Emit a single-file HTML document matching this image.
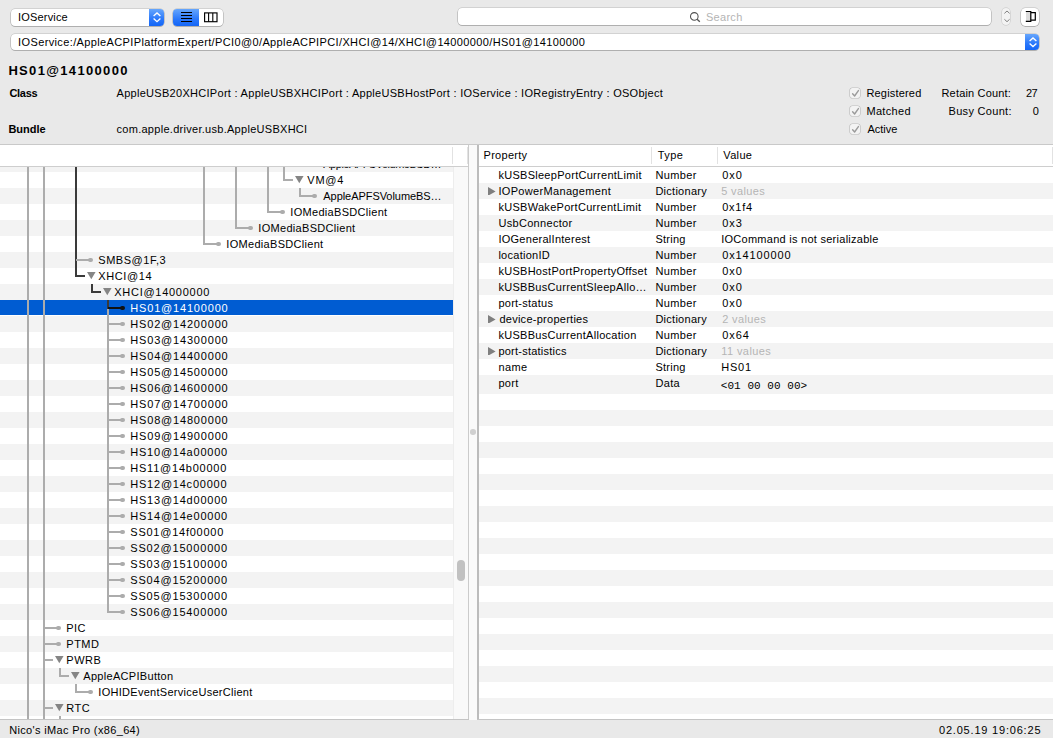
<!DOCTYPE html>
<html><head><meta charset="utf-8"><style>
html,body{margin:0;padding:0;}
body{width:1053px;height:738px;position:relative;overflow:hidden;background:#e9e9e9;font-family:"Liberation Sans",sans-serif;font-size:11px;color:#000;}
.t{position:absolute;white-space:nowrap;line-height:1;}
</style></head><body>
<div style="position:absolute;left:10.8px;top:8.5px;width:153.70px;height:17.00px;background:#fff;border-radius:4px;box-shadow:0 0 0 0.5px rgba(0,0,0,0.2),0 0.6px 0 0.4px rgba(0,0,0,0.16);overflow:hidden;"><div style="position:absolute;right:0;top:0;width:15.2px;height:100%;background:linear-gradient(#66a6fc,#2a78fb 60%,#1466f6)"></div></div>
<svg style="position:absolute;left:152.4px;top:10.5px;overflow:visible" width="10" height="12.7" viewBox="0 0 10 12.7"><path d="M1.6 5.1 L5 2 L8.4 5.1 M1.6 7.6 L5 10.7 L8.4 7.6" fill="none" stroke="#fff" stroke-width="1.35"/></svg>
<div style="position:absolute;left:173.4px;top:8.5px;width:49.40px;height:17.00px;background:#fff;border-radius:4px;box-shadow:0 0 0 0.5px rgba(0,0,0,0.2),0 0.6px 0 0.4px rgba(0,0,0,0.16);overflow:hidden;"><div style="position:absolute;left:0;top:0;width:25.6px;height:100%;background:linear-gradient(#66a6fc,#2a78fb 60%,#1466f6)"></div></div>
<div style="position:absolute;left:181px;top:12.200000000000001px;width:11px;height:1.2px;background:#000;"></div>
<div style="position:absolute;left:181px;top:15.0px;width:11px;height:1.2px;background:#000;"></div>
<div style="position:absolute;left:181px;top:17.799999999999997px;width:11px;height:1.2px;background:#000;"></div>
<div style="position:absolute;left:181px;top:20.7px;width:11px;height:1.2px;background:#000;"></div>
<svg style="position:absolute;left:203px;top:11px" width="16" height="12" viewBox="0 0 16 12"><rect x="1.6" y="1.9" width="12.4" height="8.8" fill="none" stroke="#000" stroke-width="1.15"/><line x1="5.6" y1="1.9" x2="5.6" y2="10.7" stroke="#000" stroke-width="1.1"/><line x1="9.8" y1="1.9" x2="9.8" y2="10.7" stroke="#000" stroke-width="1.1"/></svg>
<div style="position:absolute;left:457.7px;top:7.7px;width:533.80px;height:17.30px;background:#fff;border-radius:4px;box-shadow:0 0 0 0.5px rgba(0,0,0,0.2),0 0.6px 0 0.4px rgba(0,0,0,0.16);overflow:hidden;"></div>
<svg style="position:absolute;left:689px;top:11px" width="13" height="12" viewBox="0 0 13 12"><circle cx="5.3" cy="5.4" r="3.8" fill="none" stroke="#505050" stroke-width="1.05"/><line x1="8.1" y1="8.2" x2="10.8" y2="10.8" stroke="#505050" stroke-width="1.3"/></svg>
<div style="position:absolute;left:1002.1px;top:8.1px;width:8.4px;height:16.8px;background:#f3f3f3;border-radius:4.2px;box-shadow:0 0 0 0.5px rgba(0,0,0,0.16)"></div>
<svg style="position:absolute;left:1001.5px;top:9.2px;overflow:visible" width="10" height="14.7" viewBox="0 0 10 14.7"><path d="M2.4 4.4 L5 2 L7.6 4.4 M2.4 10.299999999999999 L5 12.7 L7.6 10.299999999999999" fill="none" stroke="#7a7a7a" stroke-width="0.95"/></svg>
<div style="position:absolute;left:1021.1px;top:7.7px;width:17.60px;height:18.30px;background:#fff;border-radius:4.5px;box-shadow:0 0 0 0.5px rgba(0,0,0,0.2),0 0.6px 0 0.4px rgba(0,0,0,0.16);overflow:hidden;"></div>
<svg style="position:absolute;left:1024px;top:10px" width="14" height="13" viewBox="0 0 14 13"><rect x="2" y="2" width="4.8" height="9" fill="#dcdcdc"/><path d="M1.8 1.5 H6.8 V11.4 H1.8" fill="none" stroke="#000" stroke-width="1.2"/><path d="M6.8 2.7 H11.3 V10.2 H6.8" fill="none" stroke="#000" stroke-width="1.2"/></svg>
<div style="position:absolute;left:10.8px;top:33.6px;width:1028.70px;height:16.50px;background:#fff;border-radius:4px;box-shadow:0 0 0 0.5px rgba(0,0,0,0.2),0 0.6px 0 0.4px rgba(0,0,0,0.16);overflow:hidden;"><div style="position:absolute;right:0;top:0;width:14.8px;height:100%;background:linear-gradient(#66a6fc,#2a78fb 60%,#1466f6)"></div></div>
<svg style="position:absolute;left:1027.6px;top:35.7px;overflow:visible" width="10" height="12.5" viewBox="0 0 10 12.5"><path d="M1.6 5.1 L5 2 L8.4 5.1 M1.6 7.4 L5 10.5 L8.4 7.4" fill="none" stroke="#fff" stroke-width="1.35"/></svg>
<div style="position:absolute;left:849.5px;top:87.5px;width:10.5px;height:10.5px;background:#f3f3f3;border-radius:2.5px;box-shadow:0 0 0 0.6px rgba(0,0,0,0.2)"></div>
<svg style="position:absolute;left:849.5px;top:87.5px" width="11" height="11" viewBox="0 0 11 11"><path d="M2.6 5.8 L4.6 8 L8.4 2.6" fill="none" stroke="#9b9b9b" stroke-width="1.4" stroke-linecap="round" stroke-linejoin="round"/></svg>
<div style="position:absolute;left:849.5px;top:105.5px;width:10.5px;height:10.5px;background:#f3f3f3;border-radius:2.5px;box-shadow:0 0 0 0.6px rgba(0,0,0,0.2)"></div>
<svg style="position:absolute;left:849.5px;top:105.5px" width="11" height="11" viewBox="0 0 11 11"><path d="M2.6 5.8 L4.6 8 L8.4 2.6" fill="none" stroke="#9b9b9b" stroke-width="1.4" stroke-linecap="round" stroke-linejoin="round"/></svg>
<div style="position:absolute;left:849.5px;top:123.5px;width:10.5px;height:10.5px;background:#f3f3f3;border-radius:2.5px;box-shadow:0 0 0 0.6px rgba(0,0,0,0.2)"></div>
<svg style="position:absolute;left:849.5px;top:123.5px" width="11" height="11" viewBox="0 0 11 11"><path d="M2.6 5.8 L4.6 8 L8.4 2.6" fill="none" stroke="#9b9b9b" stroke-width="1.4" stroke-linecap="round" stroke-linejoin="round"/></svg>
<div style="position:absolute;left:0px;top:144px;width:1053px;height:1px;background:#c9c9c9;"></div>
<div style="position:absolute;left:0px;top:145px;width:468px;height:574px;background:#fff;"></div>
<div style="position:absolute;left:0px;top:167px;width:453px;height:5px;background:#f3f3f3;"></div>
<div style="position:absolute;left:0px;top:188px;width:453px;height:16px;background:#f3f3f3;"></div>
<div style="position:absolute;left:0px;top:220px;width:453px;height:16px;background:#f3f3f3;"></div>
<div style="position:absolute;left:0px;top:252px;width:453px;height:16px;background:#f3f3f3;"></div>
<div style="position:absolute;left:0px;top:284px;width:453px;height:16px;background:#f3f3f3;"></div>
<div style="position:absolute;left:0px;top:316px;width:453px;height:16px;background:#f3f3f3;"></div>
<div style="position:absolute;left:0px;top:348px;width:453px;height:16px;background:#f3f3f3;"></div>
<div style="position:absolute;left:0px;top:380px;width:453px;height:16px;background:#f3f3f3;"></div>
<div style="position:absolute;left:0px;top:412px;width:453px;height:16px;background:#f3f3f3;"></div>
<div style="position:absolute;left:0px;top:444px;width:453px;height:16px;background:#f3f3f3;"></div>
<div style="position:absolute;left:0px;top:476px;width:453px;height:16px;background:#f3f3f3;"></div>
<div style="position:absolute;left:0px;top:508px;width:453px;height:16px;background:#f3f3f3;"></div>
<div style="position:absolute;left:0px;top:540px;width:453px;height:16px;background:#f3f3f3;"></div>
<div style="position:absolute;left:0px;top:572px;width:453px;height:16px;background:#f3f3f3;"></div>
<div style="position:absolute;left:0px;top:604px;width:453px;height:16px;background:#f3f3f3;"></div>
<div style="position:absolute;left:0px;top:636px;width:453px;height:16px;background:#f3f3f3;"></div>
<div style="position:absolute;left:0px;top:668px;width:453px;height:16px;background:#f3f3f3;"></div>
<div style="position:absolute;left:0px;top:700px;width:453px;height:16px;background:#f3f3f3;"></div>
<div style="position:absolute;left:0px;top:716px;width:453px;height:3px;background:#fff;"></div>
<div style="position:absolute;left:453px;top:167px;width:15px;height:552px;background:#f9f9f9;"></div>
<div style="position:absolute;left:453px;top:167px;width:1px;height:552px;background:#ededed;"></div>
<div style="position:absolute;left:457px;top:560px;width:8px;height:21px;background:#c1c1c1;border-radius:4px;"></div>
<div style="position:absolute;left:468px;top:145px;width:1px;height:574px;background:#cbcbcb;"></div>
<div style="position:absolute;left:469px;top:145px;width:8.2px;height:574px;background:#fafafa;"></div>
<div style="position:absolute;left:470.2px;top:429.2px;width:5.6px;height:5.6px;border-radius:50%;background:#d0d0d0"></div>
<div style="position:absolute;left:0px;top:300px;width:453px;height:15px;background:#005cd2;"></div>
<div style="position:absolute;left:27px;top:167px;width:2px;height:552px;background:#acacac;"></div>
<div style="position:absolute;left:43px;top:167px;width:2px;height:552px;background:#acacac;"></div>
<div style="position:absolute;left:75px;top:167px;width:2px;height:110px;background:#3a3a3a;"></div>
<div style="position:absolute;left:203px;top:167px;width:2px;height:78px;background:#acacac;"></div>
<div style="position:absolute;left:235px;top:167px;width:2px;height:62px;background:#acacac;"></div>
<div style="position:absolute;left:267px;top:167px;width:2px;height:46px;background:#acacac;"></div>
<div style="position:absolute;left:283px;top:167px;width:2px;height:14px;background:#acacac;"></div>
<div style="position:absolute;left:299px;top:188px;width:2px;height:9px;background:#acacac;"></div>
<div style="position:absolute;left:91px;top:284px;width:2px;height:9px;background:#3a3a3a;"></div>
<div style="position:absolute;left:107px;top:308px;width:2px;height:305px;background:#acacac;"></div>
<div style="position:absolute;left:107px;top:300px;width:2px;height:9px;background:#3a3a3a;"></div>
<div style="position:absolute;left:59px;top:668px;width:2px;height:9px;background:#acacac;"></div>
<div style="position:absolute;left:75px;top:684px;width:2px;height:9px;background:#acacac;"></div>
<div style="position:absolute;left:59px;top:716px;width:2px;height:3px;background:#acacac;"></div>
<div style="position:absolute;left:300px;top:163px;width:13px;height:2px;background:#acacac;"></div>
<div style="position:absolute;left:312.4px;top:161.7px;width:4.6px;height:4.6px;border-radius:50%;background:#acacac"></div>
<div style="position:absolute;left:284px;top:179px;width:8.5px;height:2px;background:#acacac;"></div>
<svg style="position:absolute;left:295.4px;top:176.4px" width="8.6" height="7.2" viewBox="0 0 8.6 7.2"><path d="M0 0 H8.6 L4.3 7.2Z" fill="#858585"/></svg>
<div style="position:absolute;left:300px;top:195px;width:13px;height:2px;background:#acacac;"></div>
<div style="position:absolute;left:312.4px;top:193.7px;width:4.6px;height:4.6px;border-radius:50%;background:#acacac"></div>
<div style="position:absolute;left:268px;top:211px;width:13px;height:2px;background:#acacac;"></div>
<div style="position:absolute;left:280.4px;top:209.7px;width:4.6px;height:4.6px;border-radius:50%;background:#acacac"></div>
<div style="position:absolute;left:236px;top:227px;width:13px;height:2px;background:#acacac;"></div>
<div style="position:absolute;left:248.39999999999998px;top:225.7px;width:4.6px;height:4.6px;border-radius:50%;background:#acacac"></div>
<div style="position:absolute;left:204px;top:243px;width:13px;height:2px;background:#acacac;"></div>
<div style="position:absolute;left:216.39999999999998px;top:241.7px;width:4.6px;height:4.6px;border-radius:50%;background:#acacac"></div>
<div style="position:absolute;left:76px;top:259px;width:13px;height:2px;background:#acacac;"></div>
<div style="position:absolute;left:88.4px;top:257.7px;width:4.6px;height:4.6px;border-radius:50%;background:#acacac"></div>
<div style="position:absolute;left:76px;top:275px;width:8.5px;height:2px;background:#3a3a3a;"></div>
<svg style="position:absolute;left:87.4px;top:272.4px" width="8.6" height="7.2" viewBox="0 0 8.6 7.2"><path d="M0 0 H8.6 L4.3 7.2Z" fill="#858585"/></svg>
<div style="position:absolute;left:92px;top:291px;width:8.5px;height:2px;background:#3a3a3a;"></div>
<svg style="position:absolute;left:103.4px;top:288.4px" width="8.6" height="7.2" viewBox="0 0 8.6 7.2"><path d="M0 0 H8.6 L4.3 7.2Z" fill="#858585"/></svg>
<div style="position:absolute;left:108px;top:307px;width:13px;height:2px;background:#111;"></div>
<div style="position:absolute;left:120.4px;top:305.7px;width:4.6px;height:4.6px;border-radius:50%;background:#111"></div>
<div style="position:absolute;left:108px;top:323px;width:13px;height:2px;background:#acacac;"></div>
<div style="position:absolute;left:120.4px;top:321.7px;width:4.6px;height:4.6px;border-radius:50%;background:#acacac"></div>
<div style="position:absolute;left:108px;top:339px;width:13px;height:2px;background:#acacac;"></div>
<div style="position:absolute;left:120.4px;top:337.7px;width:4.6px;height:4.6px;border-radius:50%;background:#acacac"></div>
<div style="position:absolute;left:108px;top:355px;width:13px;height:2px;background:#acacac;"></div>
<div style="position:absolute;left:120.4px;top:353.7px;width:4.6px;height:4.6px;border-radius:50%;background:#acacac"></div>
<div style="position:absolute;left:108px;top:371px;width:13px;height:2px;background:#acacac;"></div>
<div style="position:absolute;left:120.4px;top:369.7px;width:4.6px;height:4.6px;border-radius:50%;background:#acacac"></div>
<div style="position:absolute;left:108px;top:387px;width:13px;height:2px;background:#acacac;"></div>
<div style="position:absolute;left:120.4px;top:385.7px;width:4.6px;height:4.6px;border-radius:50%;background:#acacac"></div>
<div style="position:absolute;left:108px;top:403px;width:13px;height:2px;background:#acacac;"></div>
<div style="position:absolute;left:120.4px;top:401.7px;width:4.6px;height:4.6px;border-radius:50%;background:#acacac"></div>
<div style="position:absolute;left:108px;top:419px;width:13px;height:2px;background:#acacac;"></div>
<div style="position:absolute;left:120.4px;top:417.7px;width:4.6px;height:4.6px;border-radius:50%;background:#acacac"></div>
<div style="position:absolute;left:108px;top:435px;width:13px;height:2px;background:#acacac;"></div>
<div style="position:absolute;left:120.4px;top:433.7px;width:4.6px;height:4.6px;border-radius:50%;background:#acacac"></div>
<div style="position:absolute;left:108px;top:451px;width:13px;height:2px;background:#acacac;"></div>
<div style="position:absolute;left:120.4px;top:449.7px;width:4.6px;height:4.6px;border-radius:50%;background:#acacac"></div>
<div style="position:absolute;left:108px;top:467px;width:13px;height:2px;background:#acacac;"></div>
<div style="position:absolute;left:120.4px;top:465.7px;width:4.6px;height:4.6px;border-radius:50%;background:#acacac"></div>
<div style="position:absolute;left:108px;top:483px;width:13px;height:2px;background:#acacac;"></div>
<div style="position:absolute;left:120.4px;top:481.7px;width:4.6px;height:4.6px;border-radius:50%;background:#acacac"></div>
<div style="position:absolute;left:108px;top:499px;width:13px;height:2px;background:#acacac;"></div>
<div style="position:absolute;left:120.4px;top:497.7px;width:4.6px;height:4.6px;border-radius:50%;background:#acacac"></div>
<div style="position:absolute;left:108px;top:515px;width:13px;height:2px;background:#acacac;"></div>
<div style="position:absolute;left:120.4px;top:513.7px;width:4.6px;height:4.6px;border-radius:50%;background:#acacac"></div>
<div style="position:absolute;left:108px;top:531px;width:13px;height:2px;background:#acacac;"></div>
<div style="position:absolute;left:120.4px;top:529.7px;width:4.6px;height:4.6px;border-radius:50%;background:#acacac"></div>
<div style="position:absolute;left:108px;top:547px;width:13px;height:2px;background:#acacac;"></div>
<div style="position:absolute;left:120.4px;top:545.7px;width:4.6px;height:4.6px;border-radius:50%;background:#acacac"></div>
<div style="position:absolute;left:108px;top:563px;width:13px;height:2px;background:#acacac;"></div>
<div style="position:absolute;left:120.4px;top:561.7px;width:4.6px;height:4.6px;border-radius:50%;background:#acacac"></div>
<div style="position:absolute;left:108px;top:579px;width:13px;height:2px;background:#acacac;"></div>
<div style="position:absolute;left:120.4px;top:577.7px;width:4.6px;height:4.6px;border-radius:50%;background:#acacac"></div>
<div style="position:absolute;left:108px;top:595px;width:13px;height:2px;background:#acacac;"></div>
<div style="position:absolute;left:120.4px;top:593.7px;width:4.6px;height:4.6px;border-radius:50%;background:#acacac"></div>
<div style="position:absolute;left:108px;top:611px;width:13px;height:2px;background:#acacac;"></div>
<div style="position:absolute;left:120.4px;top:609.7px;width:4.6px;height:4.6px;border-radius:50%;background:#acacac"></div>
<div style="position:absolute;left:44px;top:627px;width:13px;height:2px;background:#acacac;"></div>
<div style="position:absolute;left:56.400000000000006px;top:625.7px;width:4.6px;height:4.6px;border-radius:50%;background:#acacac"></div>
<div style="position:absolute;left:44px;top:643px;width:13px;height:2px;background:#acacac;"></div>
<div style="position:absolute;left:56.400000000000006px;top:641.7px;width:4.6px;height:4.6px;border-radius:50%;background:#acacac"></div>
<div style="position:absolute;left:44px;top:659px;width:8.5px;height:2px;background:#acacac;"></div>
<svg style="position:absolute;left:55.4px;top:656.4px" width="8.6" height="7.2" viewBox="0 0 8.6 7.2"><path d="M0 0 H8.6 L4.3 7.2Z" fill="#858585"/></svg>
<div style="position:absolute;left:60px;top:675px;width:8.5px;height:2px;background:#acacac;"></div>
<svg style="position:absolute;left:71.4px;top:672.4px" width="8.6" height="7.2" viewBox="0 0 8.6 7.2"><path d="M0 0 H8.6 L4.3 7.2Z" fill="#858585"/></svg>
<div style="position:absolute;left:76px;top:691px;width:13px;height:2px;background:#acacac;"></div>
<div style="position:absolute;left:88.4px;top:689.7px;width:4.6px;height:4.6px;border-radius:50%;background:#acacac"></div>
<div style="position:absolute;left:44px;top:707px;width:8.5px;height:2px;background:#acacac;"></div>
<svg style="position:absolute;left:55.4px;top:704.4px" width="8.6" height="7.2" viewBox="0 0 8.6 7.2"><path d="M0 0 H8.6 L4.3 7.2Z" fill="#858585"/></svg>
<div style="position:absolute;left:479px;top:145px;width:574px;height:574px;background:#fff;"></div>
<div style="position:absolute;left:477.2px;top:145px;width:1.8px;height:574px;background:#bcbcbc;"></div>
<div style="position:absolute;left:479px;top:166px;width:574px;height:1px;background:#cecece;"></div>
<div style="position:absolute;left:651.0px;top:147px;width:1px;height:17px;background:#e2e2e2;"></div>
<div style="position:absolute;left:717.0px;top:147px;width:1px;height:17px;background:#e2e2e2;"></div>
<div style="position:absolute;left:1051.9px;top:147px;width:1px;height:17px;background:#e2e2e2;"></div>
<div style="position:absolute;left:479px;top:183px;width:574px;height:16px;background:#f3f3f3;"></div>
<div style="position:absolute;left:479px;top:215px;width:574px;height:16px;background:#f3f3f3;"></div>
<div style="position:absolute;left:479px;top:247px;width:574px;height:16px;background:#f3f3f3;"></div>
<div style="position:absolute;left:479px;top:279px;width:574px;height:16px;background:#f3f3f3;"></div>
<div style="position:absolute;left:479px;top:311px;width:574px;height:16px;background:#f3f3f3;"></div>
<div style="position:absolute;left:479px;top:343px;width:574px;height:16px;background:#f3f3f3;"></div>
<div style="position:absolute;left:479px;top:375px;width:574px;height:19px;background:#f3f3f3;"></div>
<div style="position:absolute;left:479px;top:410px;width:574px;height:16px;background:#f3f3f3;"></div>
<div style="position:absolute;left:479px;top:442px;width:574px;height:16px;background:#f3f3f3;"></div>
<div style="position:absolute;left:479px;top:474px;width:574px;height:16px;background:#f3f3f3;"></div>
<div style="position:absolute;left:479px;top:506px;width:574px;height:16px;background:#f3f3f3;"></div>
<div style="position:absolute;left:479px;top:538px;width:574px;height:16px;background:#f3f3f3;"></div>
<div style="position:absolute;left:479px;top:570px;width:574px;height:16px;background:#f3f3f3;"></div>
<div style="position:absolute;left:479px;top:602px;width:574px;height:16px;background:#f3f3f3;"></div>
<div style="position:absolute;left:479px;top:634px;width:574px;height:16px;background:#f3f3f3;"></div>
<div style="position:absolute;left:479px;top:666px;width:574px;height:16px;background:#f3f3f3;"></div>
<div style="position:absolute;left:479px;top:698px;width:574px;height:16px;background:#f3f3f3;"></div>
<svg style="position:absolute;left:488px;top:186.6px" width="7.6" height="8.8" viewBox="0 0 7.6 8.8"><path d="M0 0 V8.8 L7.6 4.4Z" fill="#7f7f7f"/></svg>
<svg style="position:absolute;left:488px;top:314.6px" width="7.6" height="8.8" viewBox="0 0 7.6 8.8"><path d="M0 0 V8.8 L7.6 4.4Z" fill="#7f7f7f"/></svg>
<svg style="position:absolute;left:488px;top:346.6px" width="7.6" height="8.8" viewBox="0 0 7.6 8.8"><path d="M0 0 V8.8 L7.6 4.4Z" fill="#7f7f7f"/></svg>
<div style="position:absolute;left:0px;top:719px;width:1053px;height:19px;background:#e9e9e9;"></div>
<div style="position:absolute;left:0px;top:719px;width:1053px;height:1px;background:#c4c4c4;"></div>
<div style="position:absolute;left:469px;top:719px;width:8.2px;height:1.2px;background:#fafafa;"></div>
<div class="t" style="left:18.10px;top:12.00px;letter-spacing:0.163px;">IOService</div>
<div class="t" style="left:706.00px;top:12.00px;color:#b4b4b4;letter-spacing:0.280px;">Search</div>
<div class="t" style="left:18.10px;top:37.00px;letter-spacing:0.369px;">IOService:/AppleACPIPlatformExpert/PCI0@0/AppleACPIPCI/XHCI@14/XHCI@14000000/HS01@14100000</div>
<div class="t" style="left:8.40px;top:64.00px;font-size:13px;font-weight:700;letter-spacing:1.333px;">HS01@14100000</div>
<div class="t" style="left:9.40px;top:88.00px;font-weight:700;letter-spacing:-0.275px;">Class</div>
<div class="t" style="left:8.40px;top:124.00px;font-weight:700;letter-spacing:-0.020px;">Bundle</div>
<div class="t" style="left:116.50px;top:88.00px;letter-spacing:0.291px;">AppleUSB20XHCIPort : AppleUSBXHCIPort : AppleUSBHostPort : IOService : IORegistryEntry : OSObject</div>
<div class="t" style="left:116.50px;top:124.00px;letter-spacing:0.283px;">com.apple.driver.usb.AppleUSBXHCI</div>
<div class="t" style="left:866.40px;top:88.00px;letter-spacing:0.189px;">Registered</div>
<div class="t" style="left:866.40px;top:106.00px;letter-spacing:0.333px;">Matched</div>
<div class="t" style="left:867.40px;top:124.00px;">Active</div>
<div class="t" style="left:941.50px;top:88.00px;letter-spacing:0.175px;">Retain Count:</div>
<div class="t" style="left:1026.00px;top:88.00px;letter-spacing:-0.600px;">27</div>
<div class="t" style="left:948.50px;top:106.00px;letter-spacing:0.310px;">Busy Count:</div>
<div class="t" style="left:1032.80px;top:106.00px;">0</div>
<div class="t" style="left:323.30px;top:159.00px;letter-spacing:-0.494px;">AppleAPFSVolumeBSD…</div>
<div class="t" style="left:307.30px;top:175.00px;letter-spacing:0.750px;">VM@4</div>
<div class="t" style="left:323.30px;top:191.00px;letter-spacing:-0.053px;">AppleAPFSVolumeBS…</div>
<div class="t" style="left:290.30px;top:207.00px;letter-spacing:0.303px;">IOMediaBSDClient</div>
<div class="t" style="left:258.30px;top:223.00px;letter-spacing:0.303px;">IOMediaBSDClient</div>
<div class="t" style="left:226.30px;top:239.00px;letter-spacing:0.303px;">IOMediaBSDClient</div>
<div class="t" style="left:98.30px;top:255.00px;letter-spacing:0.525px;">SMBS@1F,3</div>
<div class="t" style="left:98.30px;top:271.00px;letter-spacing:0.592px;">XHCI@14</div>
<div class="t" style="left:114.30px;top:287.00px;letter-spacing:0.721px;">XHCI@14000000</div>
<div class="t" style="left:130.30px;top:303.00px;color:#fff;letter-spacing:0.817px;">HS01@14100000</div>
<div class="t" style="left:130.30px;top:319.00px;letter-spacing:0.817px;">HS02@14200000</div>
<div class="t" style="left:130.30px;top:335.00px;letter-spacing:0.817px;">HS03@14300000</div>
<div class="t" style="left:130.30px;top:351.00px;letter-spacing:0.817px;">HS04@14400000</div>
<div class="t" style="left:130.30px;top:367.00px;letter-spacing:0.817px;">HS05@14500000</div>
<div class="t" style="left:130.30px;top:383.00px;letter-spacing:0.817px;">HS06@14600000</div>
<div class="t" style="left:130.30px;top:399.00px;letter-spacing:0.817px;">HS07@14700000</div>
<div class="t" style="left:130.30px;top:415.00px;letter-spacing:0.817px;">HS08@14800000</div>
<div class="t" style="left:130.30px;top:431.00px;letter-spacing:0.817px;">HS09@14900000</div>
<div class="t" style="left:130.30px;top:447.00px;letter-spacing:0.771px;">HS10@14a00000</div>
<div class="t" style="left:130.30px;top:463.00px;letter-spacing:0.771px;">HS11@14b00000</div>
<div class="t" style="left:130.30px;top:479.00px;letter-spacing:0.771px;">HS12@14c00000</div>
<div class="t" style="left:130.30px;top:495.00px;letter-spacing:0.771px;">HS13@14d00000</div>
<div class="t" style="left:130.30px;top:511.00px;letter-spacing:0.771px;">HS14@14e00000</div>
<div class="t" style="left:130.30px;top:527.00px;letter-spacing:0.759px;">SS01@14f00000</div>
<div class="t" style="left:130.30px;top:543.00px;letter-spacing:0.817px;">SS02@15000000</div>
<div class="t" style="left:130.30px;top:559.00px;letter-spacing:0.817px;">SS03@15100000</div>
<div class="t" style="left:130.30px;top:575.00px;letter-spacing:0.817px;">SS04@15200000</div>
<div class="t" style="left:130.30px;top:591.00px;letter-spacing:0.817px;">SS05@15300000</div>
<div class="t" style="left:130.30px;top:607.00px;letter-spacing:0.817px;">SS06@15400000</div>
<div class="t" style="left:66.30px;top:623.00px;letter-spacing:0.425px;">PIC</div>
<div class="t" style="left:66.30px;top:639.00px;letter-spacing:0.500px;">PTMD</div>
<div class="t" style="left:66.30px;top:655.00px;letter-spacing:0.533px;">PWRB</div>
<div class="t" style="left:83.30px;top:671.00px;letter-spacing:0.304px;">AppleACPIButton</div>
<div class="t" style="left:98.30px;top:687.00px;letter-spacing:0.281px;">IOHIDEventServiceUserClient</div>
<div class="t" style="left:66.30px;top:703.00px;letter-spacing:0.525px;">RTC</div>
<div class="t" style="left:483.50px;top:150.00px;letter-spacing:0.293px;">Property</div>
<div class="t" style="left:657.80px;top:150.00px;letter-spacing:0.400px;">Type</div>
<div class="t" style="left:723.30px;top:150.00px;letter-spacing:0.338px;">Value</div>
<div class="t" style="left:498.40px;top:170.00px;letter-spacing:0.281px;">kUSBSleepPortCurrentLimit</div>
<div class="t" style="left:655.40px;top:170.00px;letter-spacing:0.380px;">Number</div>
<div class="t" style="left:722.20px;top:170.00px;letter-spacing:0.976px;">0x0</div>
<div class="t" style="left:498.40px;top:186.00px;letter-spacing:0.331px;">IOPowerManagement</div>
<div class="t" style="left:655.40px;top:186.00px;letter-spacing:0.267px;">Dictionary</div>
<div class="t" style="left:721.20px;top:186.00px;color:#b5b5b5;letter-spacing:0.364px;">5 values</div>
<div class="t" style="left:498.40px;top:202.00px;letter-spacing:0.293px;">kUSBWakePortCurrentLimit</div>
<div class="t" style="left:655.40px;top:202.00px;letter-spacing:0.380px;">Number</div>
<div class="t" style="left:722.20px;top:202.00px;letter-spacing:0.750px;">0x1f4</div>
<div class="t" style="left:498.40px;top:218.00px;letter-spacing:0.314px;">UsbConnector</div>
<div class="t" style="left:655.40px;top:218.00px;letter-spacing:0.380px;">Number</div>
<div class="t" style="left:722.20px;top:218.00px;letter-spacing:0.976px;">0x3</div>
<div class="t" style="left:498.40px;top:234.00px;letter-spacing:0.269px;">IOGeneralInterest</div>
<div class="t" style="left:655.40px;top:234.00px;letter-spacing:0.270px;">String</div>
<div class="t" style="left:721.20px;top:234.00px;letter-spacing:0.266px;">IOCommand is not serializable</div>
<div class="t" style="left:498.40px;top:250.00px;letter-spacing:0.267px;">locationID</div>
<div class="t" style="left:655.40px;top:250.00px;letter-spacing:0.380px;">Number</div>
<div class="t" style="left:722.20px;top:250.00px;letter-spacing:0.884px;">0x14100000</div>
<div class="t" style="left:498.40px;top:266.00px;letter-spacing:0.282px;">kUSBHostPortPropertyOffset</div>
<div class="t" style="left:655.40px;top:266.00px;letter-spacing:0.380px;">Number</div>
<div class="t" style="left:722.20px;top:266.00px;letter-spacing:0.976px;">0x0</div>
<div class="t" style="left:498.40px;top:282.00px;letter-spacing:0.302px;">kUSBBusCurrentSleepAllo…</div>
<div class="t" style="left:655.40px;top:282.00px;letter-spacing:0.380px;">Number</div>
<div class="t" style="left:722.20px;top:282.00px;letter-spacing:0.976px;">0x0</div>
<div class="t" style="left:498.40px;top:298.00px;letter-spacing:0.255px;">port-status</div>
<div class="t" style="left:655.40px;top:298.00px;letter-spacing:0.380px;">Number</div>
<div class="t" style="left:722.20px;top:298.00px;letter-spacing:0.976px;">0x0</div>
<div class="t" style="left:499.40px;top:314.00px;letter-spacing:0.263px;">device-properties</div>
<div class="t" style="left:655.40px;top:314.00px;letter-spacing:0.267px;">Dictionary</div>
<div class="t" style="left:722.20px;top:314.00px;color:#b5b5b5;letter-spacing:0.372px;">2 values</div>
<div class="t" style="left:498.40px;top:330.00px;letter-spacing:0.283px;">kUSBBusCurrentAllocation</div>
<div class="t" style="left:655.40px;top:330.00px;letter-spacing:0.380px;">Number</div>
<div class="t" style="left:722.20px;top:330.00px;letter-spacing:0.951px;">0x64</div>
<div class="t" style="left:498.40px;top:346.00px;letter-spacing:0.229px;">port-statistics</div>
<div class="t" style="left:655.40px;top:346.00px;letter-spacing:0.267px;">Dictionary</div>
<div class="t" style="left:721.20px;top:346.00px;color:#b5b5b5;letter-spacing:0.419px;">11 values</div>
<div class="t" style="left:498.40px;top:362.00px;letter-spacing:0.433px;">name</div>
<div class="t" style="left:655.40px;top:362.00px;letter-spacing:0.270px;">String</div>
<div class="t" style="left:721.20px;top:362.00px;letter-spacing:0.800px;">HS01</div>
<div class="t" style="left:498.40px;top:378.00px;letter-spacing:0.300px;">port</div>
<div class="t" style="left:655.40px;top:378.00px;letter-spacing:0.367px;">Data</div>
<div class="t" style="left:720.80px;top:381.00px;font-family:'Liberation Mono',monospace;letter-spacing:0.050px;">&lt;01 00 00 00&gt;</div>
<div class="t" style="left:9.20px;top:725.00px;letter-spacing:0.348px;">Nico&#x27;s iMac Pro (x86_64)</div>
<div class="t" style="left:939.00px;top:725.00px;letter-spacing:0.800px;">02.05.19 19:06:25</div>
<div style="position:absolute;left:0;top:145px;width:468px;height:21px;background:#fff"></div>
<div style="position:absolute;left:0;top:166px;width:468px;height:1px;background:#cecece"></div>
<div style="position:absolute;left:452px;top:147px;width:1px;height:17px;background:#e2e2e2"></div>
<div style="position:absolute;left:467px;top:147px;width:1px;height:17px;background:#e2e2e2"></div>
<div style="position:absolute;left:468px;top:145px;width:1px;height:574px;background:#cbcbcb"></div>
</body></html>
